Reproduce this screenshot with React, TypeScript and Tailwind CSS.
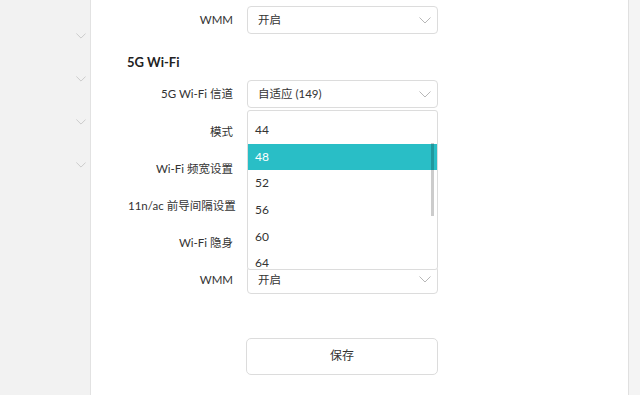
import React from "react";

const font = { fontFamily: 'Lato, "Noto Sans CJK SC", sans-serif' };

function Chevron({ className }: { className?: string }) {
  return (
    <svg className={className} viewBox="0 0 12 7" fill="none">
      <path d="M0.5 0.5 L6 6 L11.5 0.5" stroke="currentColor" strokeWidth="1" />
    </svg>
  );
}

function Select({ value, children }: { value: string; children?: React.ReactNode }) {
  return (
    <div className="relative w-[191px] h-[28px]">
      <div className="w-full h-full border border-[#dcdcdc] rounded-[4px] bg-white flex items-center pl-[10px] pr-[3px] text-[11.5px] text-[#333]">
        <span className="flex-1">{value}</span>
        <Chevron className="w-[12px] h-[7px] mr-[3px] text-[#b8b8b8]" />
      </div>
      {children}
    </div>
  );
}

function Row({ label, value, children }: { label: string; value: string; children?: React.ReactNode }) {
  return (
    <div className="flex items-center h-[28px]">
      <div className="w-[105px] text-right text-[11.5px] text-[#333] whitespace-nowrap">{label}</div>
      <div className="ml-[14px]">
        <Select value={value}>{children}</Select>
      </div>
    </div>
  );
}

function Dropdown() {
  const items = ["44", "48", "52", "56", "60", "64"];
  return (
    <div className="absolute left-0 top-[30px] w-[191px] h-[160px] bg-white border border-[#dcdcdc] rounded-[3px] overflow-hidden z-10">
      <div className="flex flex-col pt-[6px]">
        {items.map((it) => (
          <div
            key={it}
            className={
              "h-[26.6px] flex items-center pl-[7px] text-[12px] shrink-0 " +
              (it === "48" ? "bg-[#29bec6] text-white" : "text-[#333]")
            }
          >
            {it}
          </div>
        ))}
      </div>
      <div className="absolute right-[3px] top-[32px] w-[3px] h-[73px] bg-[rgba(0,0,0,0.2)]" />
    </div>
  );
}

export default function App() {
  return (
    <div className="flex w-[640px] h-[395px] overflow-hidden bg-white" style={font}>
      <div className="w-[91px] h-full bg-[#f2f2f2] border-r border-[#e2e2e2] flex flex-col pt-[14px] shrink-0">
        {[0, 1, 2, 3].map((i) => (
          <div key={i} className="h-[43px] flex items-center justify-end pr-[4px]">
            <Chevron className="w-[10px] h-[6px] text-[#c4c4c4]" />
          </div>
        ))}
      </div>
      <div className="flex-1 h-full bg-white pl-[37px] pt-[6px] flex flex-col">
        <Row label="WMM" value="开启" />
        <div className="h-[18px] mt-[20px] mb-[8px] -ml-[1px] flex items-center text-[13px] font-bold text-[#222]">5G Wi-Fi</div>
        <div className="flex flex-col gap-[9.2px]">
          <Row label="5G Wi-Fi 信道" value="自适应 (149)">
            <Dropdown />
          </Row>
          <Row label="模式" value="" />
          <Row label="Wi-Fi 频宽设置" value="" />
          <Row label="11n/ac 前导间隔设置" value="" />
          <Row label="Wi-Fi 隐身" value="" />
          <Row label="WMM" value="开启" />
        </div>
        <div className="mt-[44px] ml-[118px] w-[192px] h-[37px] border border-[#dcdcdc] rounded-[5px] flex items-center justify-center text-[12px] text-[#333]">
          保存
        </div>
      </div>
      <div className="w-[12px] h-full bg-[#f4f4f4] border-l border-[#e0e0e0] shrink-0" />
    </div>
  );
}
